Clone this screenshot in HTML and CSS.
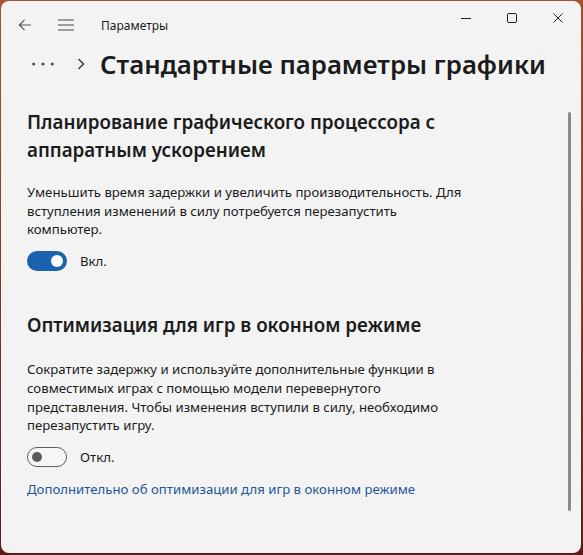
FILE: index.html
```html
<!DOCTYPE html>
<html lang="ru">
<head>
<meta charset="utf-8">
<link rel="stylesheet" href="styles.css">
</head>
<body>
<div class="window">
  <div class="titlebar">
    <div class="tb-left">
      <span class="tb-icon back">
        <svg width="14" height="14" viewBox="0 0 14 14"><path d="M13 7H1.5M6.5 1.8L1.3 7l5.2 5.2" fill="none" stroke="#555" stroke-width="1.1"/></svg>
      </span>
      <span class="tb-icon menu">
        <svg width="16" height="12" viewBox="0 0 16 12"><path d="M0 1h16M0 6h16M0 11h16" fill="none" stroke="#444" stroke-width="1.1"/></svg>
      </span>
      <span class="app-title">Параметры</span>
    </div>
    <div class="controls">
      <span class="ctl"><svg width="10" height="10" viewBox="0 0 10 10"><path d="M0 5.5h10" stroke="#222" stroke-width="1"/></svg></span>
      <span class="ctl"><svg width="10" height="10" viewBox="0 0 10 10"><rect x="0.5" y="0.5" width="9" height="9" rx="1.5" fill="none" stroke="#222" stroke-width="1"/></svg></span>
      <span class="ctl"><svg width="10" height="10" viewBox="0 0 10 10"><path d="M0.5 0.5l9 9M9.5 0.5l-9 9" stroke="#222" stroke-width="1"/></svg></span>
    </div>
  </div>

  <div class="header">
    <svg class="dots" width="22" height="4" viewBox="0 0 22 4"><circle cx="1.7" cy="2" r="1.6" fill="#555"/><circle cx="11" cy="2" r="1.6" fill="#555"/><circle cx="20.3" cy="2" r="1.6" fill="#555"/></svg>
    <svg class="chev" width="8" height="12" viewBox="0 0 8 12"><path d="M1.5 1l5 5-5 5" fill="none" stroke="#333" stroke-width="1.4"/></svg>
    <h1 class="page-title">Стандартные параметры графики</h1>
  </div>

  <div class="content">
    <section class="section">
      <h2 class="sec-title">Планирование графического процессора с<br>аппаратным ускорением</h2>
      <p class="desc">Уменьшить время задержки и увеличить производительность. Для<br>вступления изменений в силу потребуется перезапустить<br>компьютер.</p>
      <div class="toggle-row">
        <span class="toggle on"><span class="knob"></span></span>
        <span class="toggle-label">Вкл.</span>
      </div>
    </section>

    <section class="section second">
      <h2 class="sec-title">Оптимизация для игр в оконном режиме</h2>
      <p class="desc desc-wide">Сократите задержку и используйте дополнительные функции в<br>совместимых играх с помощью модели перевернутого<br>представления. Чтобы изменения вступили в силу, необходимо<br>перезапустить игру.</p>
      <div class="toggle-row">
        <span class="toggle off"><span class="knob"></span></span>
        <span class="toggle-label">Откл.</span>
      </div>
      <a class="link" href="#">Дополнительно об оптимизации для игр в оконном режиме</a>
    </section>
  </div>

  <div class="scrollbar"></div>
</div>
</body>
</html>
```

FILE: styles.css
```css
html, body {
  margin: 0;
  padding: 0;
}
body {
  width: 583px;
  height: 555px;
  background: linear-gradient(180deg, #a4532c 0%, #8a3a26 50%, #5e1a1a 100%);
  font-family: "Noto Sans", "Segoe UI", sans-serif;
  color: #1b1b1b;
  overflow: hidden;
}
.window {
  position: relative;
  margin: 1px 0 0 1px;
  width: 580px;
  height: 552px;
  background: #f3f3f3;
  border-radius: 8px;
  overflow: hidden;
}
.titlebar {
  height: 47px;
  display: flex;
  justify-content: space-between;
  align-items: flex-start;
}
.tb-left {
  display: flex;
  align-items: center;
  height: 47px;
}
.tb-icon {
  display: flex;
  align-items: center;
  justify-content: center;
}
.back {
  width: 14px;
  margin-left: 17px;
}
.menu {
  width: 16px;
  margin-left: 26px;
}
.app-title {
  margin-left: 27px;
  font-size: 12px;
  color: #1b1b1b;
  margin-top: 2px;
}
.controls {
  display: flex;
}
.ctl {
  width: 46px;
  height: 33px;
  display: flex;
  align-items: center;
  justify-content: center;
}
.header {
  display: flex;
  align-items: center;
  height: 32px;
  padding-left: 31px;
}
.dots {
  display: block;
}
.chev {
  margin-left: 23px;
}
.page-title {
  margin: 0 0 0 15px;
  font-size: 25.8px;
  font-weight: 600;
  color: #1b1b1b;
}
.content {
  padding-left: 26px;
  padding-top: 28px;
}
.sec-title {
  margin: 0;
  font-size: 18.8px;
  font-weight: 600;
  line-height: 28px;
  color: #1b1b1b;
}
.desc {
  margin: 19px 0 0 0;
  font-size: 13.2px;
  line-height: 18.7px;
  color: #1b1b1b;
}
.desc-wide {
  margin-top: 21px;
}
.toggle-row {
  display: flex;
  align-items: center;
  margin-top: 11px;
  height: 22px;
}
.toggle {
  width: 40px;
  height: 20px;
  border-radius: 10px;
  box-sizing: border-box;
  display: flex;
  align-items: center;
}
.toggle.on {
  background: #1a62ae;
  justify-content: flex-end;
  padding-right: 4px;
}
.toggle.on .knob {
  width: 12px;
  height: 12px;
  border-radius: 50%;
  background: #fff;
}
.toggle.off {
  border: 1px solid #5f5f5f;
  padding-left: 4px;
  background: #f6f6f6;
}
.toggle.off .knob {
  width: 10px;
  height: 10px;
  border-radius: 50%;
  background: #5a5a5a;
}
.toggle-label {
  margin-left: 13px;
  font-size: 13.2px;
  color: #1b1b1b;
}
.second {
  margin-top: 39px;
}
.link {
  display: block;
  margin-top: 12px;
  font-size: 13.2px;
  color: #1d5699;
  text-decoration: none;
}
.scrollbar {
  position: absolute;
  left: 567px;
  top: 111px;
  width: 3px;
  height: 399px;
  border-radius: 2px;
  background: #8a8a8a;
}
```
